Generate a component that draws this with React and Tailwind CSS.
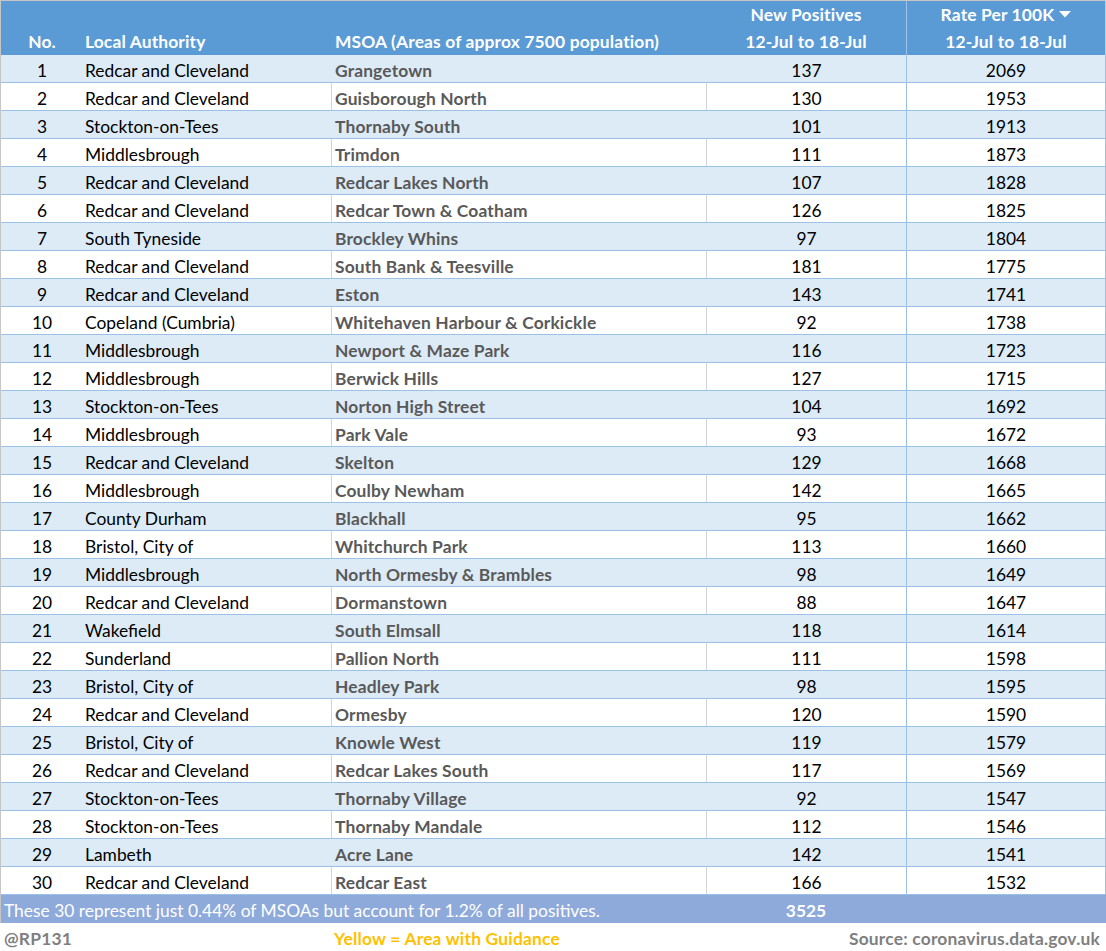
const rows = [
  [1, 'Redcar and Cleveland', 'Grangetown', 137, 2069],
  [2, 'Redcar and Cleveland', 'Guisborough North', 130, 1953],
  [3, 'Stockton-on-Tees', 'Thornaby South', 101, 1913],
  [4, 'Middlesbrough', 'Trimdon', 111, 1873],
  [5, 'Redcar and Cleveland', 'Redcar Lakes North', 107, 1828],
  [6, 'Redcar and Cleveland', 'Redcar Town & Coatham', 126, 1825],
  [7, 'South Tyneside', 'Brockley Whins', 97, 1804],
  [8, 'Redcar and Cleveland', 'South Bank & Teesville', 181, 1775],
  [9, 'Redcar and Cleveland', 'Eston', 143, 1741],
  [10, 'Copeland (Cumbria)', 'Whitehaven Harbour & Corkickle', 92, 1738],
  [11, 'Middlesbrough', 'Newport & Maze Park', 116, 1723],
  [12, 'Middlesbrough', 'Berwick Hills', 127, 1715],
  [13, 'Stockton-on-Tees', 'Norton High Street', 104, 1692],
  [14, 'Middlesbrough', 'Park Vale', 93, 1672],
  [15, 'Redcar and Cleveland', 'Skelton', 129, 1668],
  [16, 'Middlesbrough', 'Coulby Newham', 142, 1665],
  [17, 'County Durham', 'Blackhall', 95, 1662],
  [18, 'Bristol, City of', 'Whitchurch Park', 113, 1660],
  [19, 'Middlesbrough', 'North Ormesby & Brambles', 98, 1649],
  [20, 'Redcar and Cleveland', 'Dormanstown', 88, 1647],
  [21, 'Wakefield', 'South Elmsall', 118, 1614],
  [22, 'Sunderland', 'Pallion North', 111, 1598],
  [23, 'Bristol, City of', 'Headley Park', 98, 1595],
  [24, 'Redcar and Cleveland', 'Ormesby', 120, 1590],
  [25, 'Bristol, City of', 'Knowle West', 119, 1579],
  [26, 'Redcar and Cleveland', 'Redcar Lakes South', 117, 1569],
  [27, 'Stockton-on-Tees', 'Thornaby Village', 92, 1547],
  [28, 'Stockton-on-Tees', 'Thornaby Mandale', 112, 1546],
  [29, 'Lambeth', 'Acre Lane', 142, 1541],
  [30, 'Redcar and Cleveland', 'Redcar East', 166, 1532],
];

const cols = 'grid grid-cols-[82px_248px_375px_200px_1fr]';

export default function App() {
  return (
    <div
      className="w-[1106px] h-[951px] bg-white text-[17.4px] leading-none"
      style={{ fontFamily: 'Lato, "Open Sans", sans-serif' }}
    >
      <div className="border-t border-l border-[#c6c6c6]">
        {/* header */}
        <div className={`${cols} h-[54px] bg-[#5b9bd5] text-white font-bold tracking-[0.15px] border-r border-[#b7cfe9]`}>
          <div className="flex items-end justify-center pb-[5px]">No.</div>
          <div className="flex items-end pl-[2px] pb-[5px]">Local Authority</div>
          <div className="flex items-end pl-[4px] pb-[5px] whitespace-nowrap">MSOA (Areas of approx 7500 population)</div>
          <div className="flex flex-col items-center justify-between pt-[5px] pb-[5px]">
            <span>New Positives</span>
            <span>12-Jul to 18-Jul</span>
          </div>
          <div className="flex flex-col items-center justify-between pt-[5px] pb-[5px] border-l border-[#9dc3e8]">
            <span className="flex items-center gap-[5px]">
              Rate Per 100K
              <svg width="12" height="7" viewBox="0 0 12 7">
                <path d="M0 0 L12 0 L6 6.5 Z" fill="white" />
              </svg>
            </span>
            <span>12-Jul to 18-Jul</span>
          </div>
        </div>

        {/* rows */}
        {rows.map(([n, la, msoa, pos, rate], i) => {
          const shaded = i % 2 === 0;
          const line = shaded ? 'border-transparent' : 'border-[#d4d4d4]';
          return (
            <div
              key={n}
              className={`${cols} h-[28px] border-b border-r border-[#9bc2e6] ${shaded ? 'bg-[#ddebf7]' : 'bg-white'} text-black`}
            >
              <div className="flex items-center justify-center pt-[5px]">{n}</div>
              <div className="flex items-center pl-[2px] pt-[5px]">{la}</div>
              <div className={`flex items-center pl-[3px] pt-[5px] font-bold tracking-[0.15px] text-[#595959] border-l ${line}`}>{msoa}</div>
              <div className={`flex items-center justify-center pt-[5px] border-l ${line}`}>{pos}</div>
              <div className="flex items-center justify-center pt-[5px] border-l border-[#9bc2e6]">{rate}</div>
            </div>
          );
        })}

        {/* total */}
        <div className={`${cols} h-[28px] bg-[#8eaadb] text-white`}>
          <div className="col-span-3 flex items-center pl-[3px] pt-[4px] whitespace-nowrap">
            These 30 represent just 0.44% of MSOAs but account for 1.2% of all positives.
          </div>
          <div className="flex items-center justify-center pt-[4px] font-bold">3525</div>
          <div></div>
        </div>
      </div>

      {/* footer notes */}
      <div className={`${cols} h-[28px] font-bold tracking-[0.2px]`}>
        <div className="col-span-2 flex items-center pl-[4px] pt-[4px] text-[#7f7f7f]">@RP131</div>
        <div className="flex items-center pl-[4px] pt-[4px] text-[#ffc000] whitespace-nowrap">Yellow = Area with Guidance</div>
        <div className="col-span-2 flex items-center justify-end pr-[6px] pt-[4px] text-[#7f7f7f]">
          Source: coronavirus.data.gov.uk
        </div>
      </div>
    </div>
  );
}
